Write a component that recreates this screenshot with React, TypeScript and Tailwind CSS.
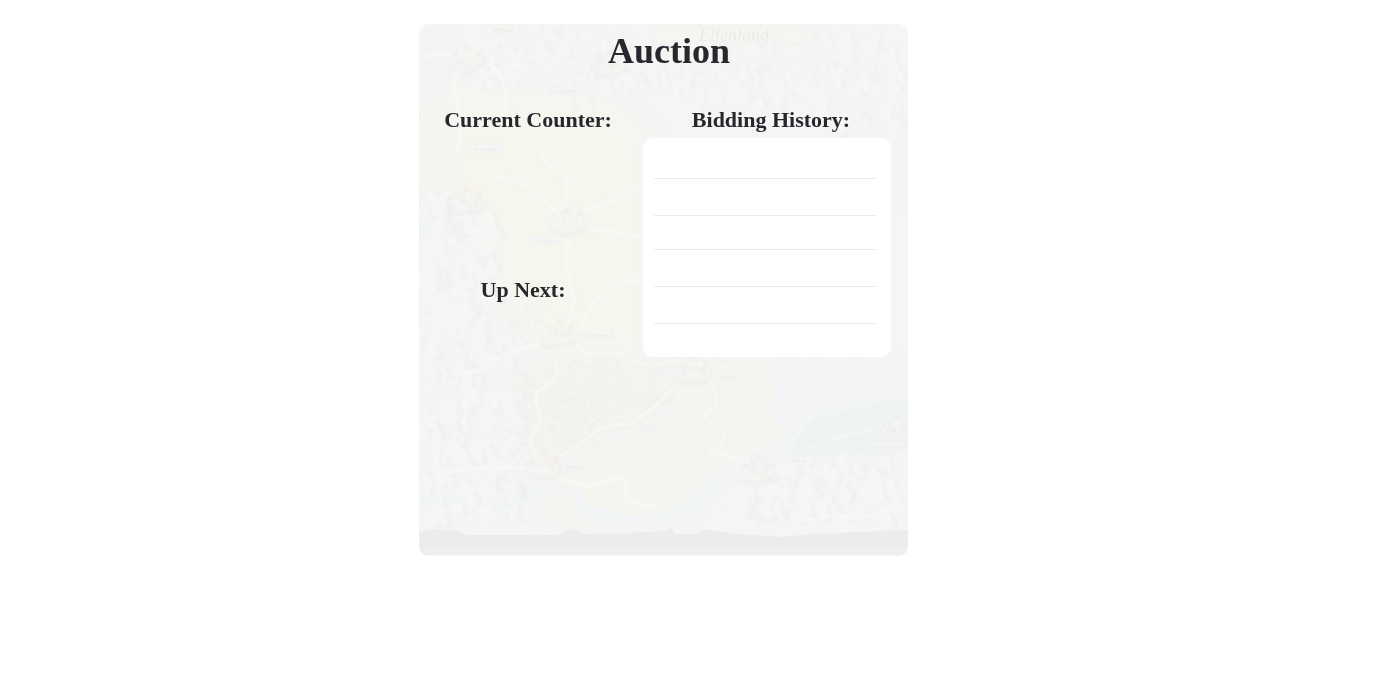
type Region = {
  x: number;
  y: number;
  w: number;
  h: number;
  count: number;
  size: number;
};

const mountainRegions: Region[] = [
  { x: 60, y: 2, w: 420, h: 60, count: 130, size: 14 },
  { x: 150, y: 40, w: 260, h: 40, count: 50, size: 12 },
  { x: 2, y: 175, w: 75, h: 110, count: 45, size: 20 },
  { x: 2, y: 305, w: 100, h: 190, count: 150, size: 16 },
  { x: 320, y: 435, w: 165, h: 60, count: 80, size: 17 },
  { x: 400, y: 40, w: 85, h: 75, count: 25, size: 14 },
];

const forestRegions: Region[] = [
  { x: 128, y: 350, w: 110, h: 55, count: 420, size: 3 },
  { x: 145, y: 335, w: 60, h: 20, count: 90, size: 3 },
  { x: 90, y: 350, w: 30, h: 85, count: 140, size: 3 },
  { x: 110, y: 395, w: 70, h: 30, count: 140, size: 3 },
  { x: 50, y: 275, w: 75, h: 35, count: 120, size: 3 },
  { x: 230, y: 345, w: 25, h: 50, count: 70, size: 3 },
];

function makeRandom(seed: number) {
  let state = seed;
  return () => {
    state = (state * 16807) % 2147483647;
    return state / 2147483647;
  };
}

function scatter(regions: Region[], seed: number) {
  const random = makeRandom(seed);
  return regions.flatMap((r) =>
    Array.from({ length: r.count }, () => ({
      x: Math.round(r.x + random() * r.w),
      y: Math.round(r.y + random() * r.h),
      s: r.size * (0.6 + random() * 0.7),
      turn: Math.round(random() * 50 - 25),
    })),
  );
}

const peaks = scatter(mountainRegions, 4211);
const trees = scatter(forestRegions, 977);

const labels = [
  { text: "Wylhien", x: 84, y: 6, w: 32 },
  { text: "Jaccaranda", x: 145, y: 67, w: 34 },
  { text: "Parundia", x: 68, y: 125, w: 32 },
  { text: "Al'Baran", x: 126, y: 217, w: 30 },
  { text: "Throtmanni", x: 177, y: 311, w: 34 },
  { text: "Rivinia", x: 156, y: 443, w: 28 },
  { text: "Tichih", x: 309, y: 353, w: 30 },
  { text: "Virst", x: 380, y: 437, w: 24 },
  { text: "Strykhaven", x: 470, y: 423, w: 32 },
];

const towns = [
  [48, 34],
  [48, 176],
  [148, 196],
  [140, 308],
  [125, 440],
  [275, 345],
  [340, 445],
  [190, 38],
  [478, 405],
];

const forestRoads = [
  "M142 311Q132 322 137 338T127 362T118 382T118 402T112 420L118 438",
  "M150 311Q158 326 172 331Q196 325 210 335Q225 342 240 341Q258 334 280 340T310 341",
  "M132 437Q150 428 165 417Q185 398 210 401Q232 386 240 378T268 351Q290 350 296 366T290 386T297 402T290 428",
];

const plainRoads = [
  "M75 152Q98 154 113 166T140 192",
  "M120 125Q126 140 140 148T145 186",
  "M165 185Q190 180 205 172T230 156",
  "M175 206Q190 206 205 210T226 212",
  "M150 217Q144 242 152 262T145 305",
  "M160 310Q164 290 180 274T218 256",
  "M48 35Q30 52 38 78T36 130",
  "M70 40Q84 50 86 68T82 90",
  "M0 33Q20 30 35 29T60 34",
  "M35 349Q60 350 75 338T120 320",
  "M28 448Q70 442 110 444Q135 446 150 458Q178 466 196 454Q208 454 207 468Q210 484 240 480",
  "M290 428Q308 428 325 440",
  "M375 491Q392 500 410 491",
  "M415 491Q442 498 470 486",
];

function MapBackground() {
  return (
    <svg
      aria-hidden="true"
      className="absolute inset-0 -z-10 h-full w-full"
      viewBox="0 0 489 532"
      preserveAspectRatio="none"
      fill="none"
    >
      <defs>
        <filter id="wash" x="-20%" y="-20%" width="140%" height="140%" colorInterpolationFilters="sRGB">
          <feGaussianBlur stdDeviation="12" />
        </filter>
        <filter id="ink" colorInterpolationFilters="sRGB">
          <feTurbulence type="fractalNoise" baseFrequency="0.09" numOctaves="3" seed="7" result="noise" />
          <feDisplacementMap in="SourceGraphic" in2="noise" scale="9" xChannelSelector="R" yChannelSelector="G" />
          <feGaussianBlur stdDeviation="0.8" />
        </filter>
        <filter id="soft" colorInterpolationFilters="sRGB">
          <feGaussianBlur stdDeviation="0.8" />
        </filter>
      </defs>
      <rect width="489" height="532" fill="#f5f5f4" />
      <g filter="url(#wash)">
        <path d="M70 75L190 85L225 120V330L130 325L80 260L70 200L0 160V70Z" fill="#f6f6ef" />
        <path d="M0 50L45 100L40 170L0 190Z" fill="#f4f5f0" />
        <path d="M275 350L355 335L370 400L300 430L250 490H130L150 450L260 405Z" fill="#f4f5ee" />
        <path d="M90 340L240 345L250 385L110 440Z" fill="#f3f4f1" />
        <path d="M0 180H60L80 290L20 320L0 500Z" fill="#f5f5f5" />
      </g>
      <g filter="url(#ink)">
        <path d="M0 5L20 0L40 8L30 40L28 65L12 78L0 84Z" fill="#f3f5f5" />
        <path d="M-8 165L14 176L17 195L8 215L-8 224Z" fill="#f1f4f5" />
        <path d="M499 315L470 335L365 334L350 350L358 370L346 385L362 402L368 428L499 434Z" fill="#f2f4f5" />
        <path d="M499 86L477 98L482 125L470 145L476 180L499 195Z" fill="#f3f4f5" />
        <path d="M366 429L395 395L499 370V425L410 434Z" fill="#eff3f4" />
        <path
          d="M-8 468L38 472L65 480L88 481L88 465L110 461L140 463L161 463L167 480L190 488L225 494L255 485L297 455L307 442L325 433L368 428L372 436L325 439L310 447L300 467L262 492L235 502L200 497L164 490L149 466L112 468L105 486L75 489L38 482L-8 479Z"
          fill="#f1f4f5"
        />
        <g opacity="0.6">
          {peaks.map((p, i) => (
            <g key={i} transform={`translate(${p.x} ${p.y}) rotate(${p.turn}) scale(${p.s / 12})`}>
              <path d="M-9 6L-4 0L0 -7L4 0L9 7L3 4L0 8L-3 4Z" fill="#f7f7f7" />
              <path d="M0 -7L1 0L3 3L2 7L8 6L4 0Z" fill="#efefee" />
            </g>
          ))}
        </g>
        <g opacity="0.65">
          {trees.map((t, i) => (
            <circle
              key={i}
              cx={t.x}
              cy={t.y}
              r={t.s / 2}
              fill={i % 3 === 0 ? "#f6f7f3" : "#ecefeb"}
            />
          ))}
        </g>
      </g>
      <g filter="url(#soft)">
        <g stroke="#f0f0ed" strokeWidth="6" strokeLinecap="round" strokeLinejoin="round">
          {forestRoads.map((d) => (
            <path key={d} d={d} />
          ))}
        </g>
        <g stroke="#f7f7f5" strokeWidth="4" strokeLinecap="round" strokeLinejoin="round">
          {forestRoads.map((d) => (
            <path key={d} d={d} />
          ))}
          {plainRoads.map((d) => (
            <path key={d} d={d} />
          ))}
        </g>
        <path d="M367 425L393 391L420 340L450 315" stroke="#f7f8f8" strokeWidth="2" strokeDasharray="14 2" />
        <path d="M389 426Q415 411 440 409L465 400" stroke="#f7f8f8" strokeWidth="2" strokeDasharray="10 2" />
        <path
          d="M230 5L272 2L365 5L383 2L395 13L380 20L360 17L310 20L270 17L237 20Z"
          fill="#f5f5f2"
          stroke="#f2f1ee"
        />
      </g>
      <g filter="url(#ink)" opacity="0.75">
        {towns.map(([x, y], i) => (
          <g key={i} transform={`translate(${x} ${y})`}>
            <path d="M-20 11L-8 15L8 14L22 8" stroke="#ececea" strokeWidth="2" />
            <path
              d="M-16 8V-2L-12 -7L-8 -1V2H-4V-8L0 -14L4 -8V0H8L12 -8L16 0V8L5 12H-8Z"
              fill="#f5f4f2"
              stroke="#ebebed"
            />
            <path
              d="M-12 -7L-9 -2H-15ZM0 -14L4 -8H-4ZM12 -8L15 -2H9Z"
              fill={i === 3 ? "#f0efd5" : i === 2 ? "#ebecf0" : "#f3e9e7"}
            />
            <path d="M-10 6V3M-3 5V0M3 7V3M9 5V1" stroke="#eae9ec" strokeWidth="2" />
          </g>
        ))}
      </g>
      <g fontFamily="'Liberation Serif', serif" textAnchor="middle">
        {labels.map((l) => (
          <g key={l.text}>
            <rect
              x={l.x - l.w / 2}
              y={l.y - 5}
              width={l.w}
              height="9"
              fill="#f5f5f3"
              stroke="#f1f1ef"
            />
            <text x={l.x} y={l.y + 2} fontSize="7" fill="#eaeae8">
              {l.text}
            </text>
          </g>
        ))}
        <text x="315" y="17" fontSize="18" fontStyle="italic" fill="#ebebe9">
          Elfenland
        </text>
      </g>
      <path
        d="M0 508L15 505L25 507L35 506L48 511H90L138 511L148 507L155 504L163 510L205 509L245 507L252 504L257 510H277L286 505L295 507L320 510L363 513L390 510L489 506V532H0Z"
        fill="#ececec"
      />
      <rect y="524" width="489" height="7" fill="#eeeeee" />
      <rect y="531" width="489" height="1" fill="#f5f5f5" />
    </svg>
  );
}

const historyRows = ["h-[37px]", "h-[37px]", "h-[34px]", "h-[37px]", "h-[37px]"];

export default function App() {
  return (
    <main className="grid min-h-screen grid-cols-[419fr_489fr_492fr] items-start bg-white pt-6 font-['Liberation_Serif',serif] text-[#28272e]">
      <section className="relative isolate col-start-2 overflow-hidden rounded-[10px] pt-[7px] pb-[199px]">
        <MapBackground />
        <h1 className="pl-[11px] text-center text-4xl font-bold">Auction</h1>
        <div className="mt-[35px] grid grid-cols-[224fr_248fr] pr-[17px]">
          <div className="flex flex-col gap-[142px] text-center text-[22px] leading-7 font-bold">
            <h2 className="pr-1.5">Current Counter:</h2>
            <h2 className="pr-4">Up Next:</h2>
          </div>
          <div>
            <h2 className="mb-1 pl-2 text-center text-[22px] leading-7 font-bold">Bidding History:</h2>
            <ul className="rounded-[10px] bg-white pt-1 pr-[15px] pb-[33px] pl-[11px]">
              {historyRows.map((height, i) => (
                <li key={i} className={`${height} border-b border-[#ebebeb]`} />
              ))}
            </ul>
          </div>
        </div>
      </section>
    </main>
  );
}
